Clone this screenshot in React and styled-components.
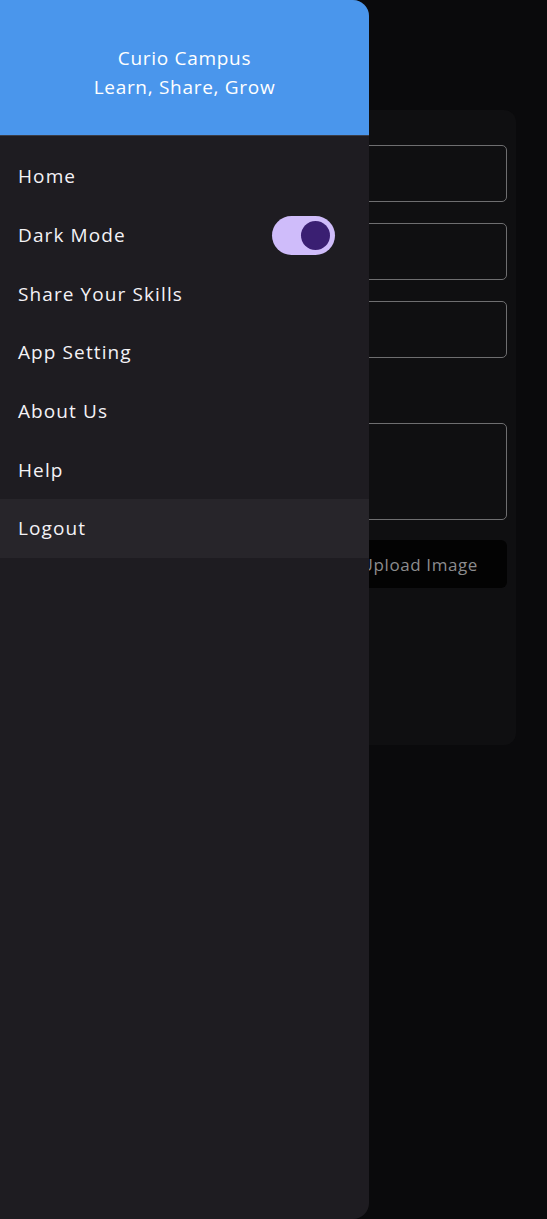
import React, { useState } from "react";
import styled, { createGlobalStyle } from "styled-components";

const GlobalStyle = createGlobalStyle`
  html, body {
    margin: 0;
    padding: 0;
    background: #0a0a0c;
    font-family: "Open Sans", "Noto Sans", sans-serif;
  }
  * { box-sizing: border-box; }
`;

const menu = ["Home", "Dark Mode", "Share Your Skills", "App Setting", "About Us", "Help", "Logout"];

const App = () => {
  const [dark, setDark] = useState(true);

  return (
    <>
      <GlobalStyle />
      <Screen>
        {/* 뒤쪽 폼 화면 */}
        <Page>
          <Card>
            <Field />
            <Field />
            <Field />
            <Spacer />
            <Field $tall />
            <UploadButton>Upload Image</UploadButton>
          </Card>
        </Page>

        {/* 사이드 드로어 */}
        <Drawer>
          <DrawerHeader>
            <Title>Curio Campus</Title>
            <Title>Learn, Share, Grow</Title>
          </DrawerHeader>
          <MenuList>
            {menu.map((item) => (
              <MenuItem key={item} $active={item === "Logout"}>
                {item}
                {item === "Dark Mode" && (
                  <Switch $on={dark} onClick={() => setDark(!dark)}>
                    <Thumb $on={dark} />
                  </Switch>
                )}
              </MenuItem>
            ))}
          </MenuList>
        </Drawer>
      </Screen>
    </>
  );
};

export default App;

const Screen = styled.div`
  position: relative;
  width: 547px;
  height: 1219px;
  overflow: hidden;
  background: #0a0a0c;
`;

const Page = styled.div`
  padding: 110px 31px 0 31px;
`;

const Card = styled.div`
  height: 635px;
  background: #0f0f11;
  border-radius: 12px;
  padding: 35px 9px 0 20px;
  display: flex;
  flex-direction: column;
  gap: 21px;
`;

const Field = styled.div`
  height: ${(p) => (p.$tall ? "97px" : "57px")};
  border: 1px solid #6e6e70;
  border-radius: 5px;
  background: #0f0f11;
`;

const Spacer = styled.div`
  height: 23px;
`;

const UploadButton = styled.div`
  height: 48px;
  margin-top: -1px;
  background: #030303;
  border-radius: 6px;
  display: flex;
  align-items: center;
  justify-content: flex-end;
  padding-right: 29px;
  color: #8c8c8e;
  font-size: 17px;
  letter-spacing: 0.6px;
`;

const Drawer = styled.nav`
  position: absolute;
  top: 0;
  left: 0;
  width: 369px;
  height: 1219px;
  background: #1e1c21;
  border-radius: 0 16px 16px 0;
  overflow: hidden;
  display: flex;
  flex-direction: column;
`;

const DrawerHeader = styled.div`
  height: 136px;
  background: #4a96ec;
  border-bottom: 1px solid #3a3d48;
  display: flex;
  flex-direction: column;
  align-items: center;
  padding-top: 44px;
`;

const Title = styled.div`
  color: #ffffff;
  font-size: 19px;
  line-height: 29px;
  letter-spacing: 0.7px;
`;

const MenuList = styled.div`
  padding-top: 11px;
  display: flex;
  flex-direction: column;
`;

const MenuItem = styled.div`
  height: 58.7px;
  display: flex;
  align-items: center;
  justify-content: space-between;
  padding: 0 34px 0 18px;
  color: #f4f2f6;
  font-size: 19px;
  letter-spacing: 1.1px;
  background: ${(p) => (p.$active ? "#27252a" : "transparent")};
`;

const Switch = styled.div`
  width: 63px;
  height: 39px;
  border-radius: 20px;
  background: #cfbcfa;
  display: flex;
  align-items: center;
  justify-content: ${(p) => (p.$on ? "flex-end" : "flex-start")};
  padding: 0 5px;
  cursor: pointer;
`;

const Thumb = styled.div`
  width: 29px;
  height: 29px;
  border-radius: 50%;
  background: #3a1f72;
`;
